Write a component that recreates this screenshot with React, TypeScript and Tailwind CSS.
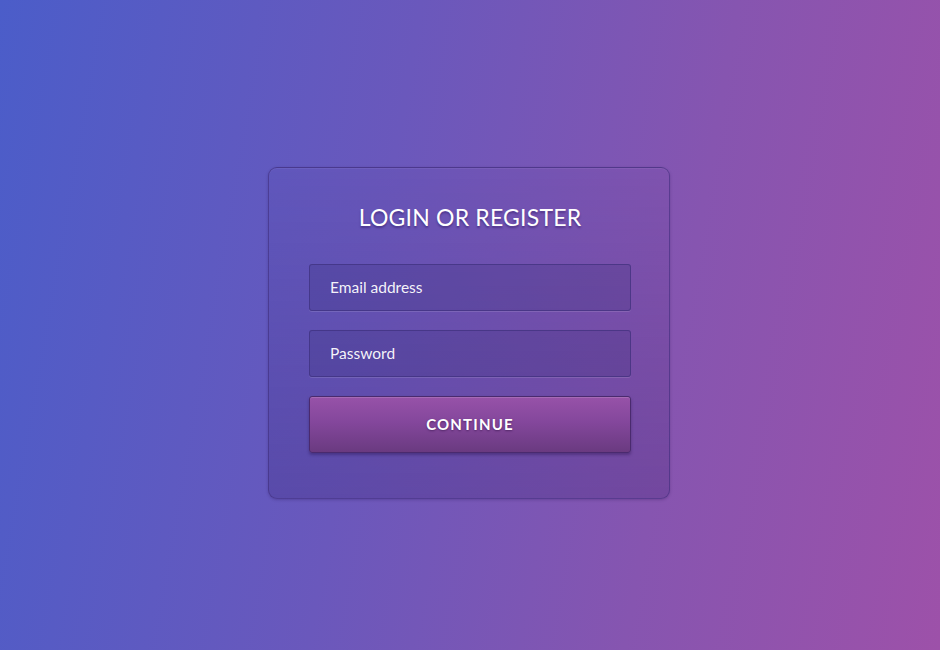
export default function App() {
  return (
    <div className="w-[940px] h-[650px] flex items-center justify-center pt-[16px] pr-[2px] bg-[linear-gradient(100deg,#4b5dc9_0%,#6a58bc_40%,#8655b0_70%,#9d51a9_100%)] font-['Lato','Liberation_Sans',sans-serif]">

      {/* CARD */}

      <div className="w-[402px] h-[332px] rounded-[9px] border border-[#3f2d7c]/60 bg-[linear-gradient(180deg,rgba(60,30,110,0.04)_0%,rgba(45,25,100,0.22)_100%)] shadow-[0_1px_3px_rgba(30,10,70,0.25),inset_0_1px_0_rgba(255,255,255,0.06)] pl-[40px] pr-[38px] pt-[35px]">

        <h1 className="text-center text-[23px] leading-[28px] text-white tracking-[0.2px] [text-shadow:0_2px_2px_rgba(40,20,90,0.45)]">
          LOGIN OR REGISTER
        </h1>

        <div className="mt-[33px] flex flex-col gap-[19px]">

          <div className="h-[47px] rounded-[3px] border border-[#3a2d78]/60 bg-[#2e2a6e]/20 shadow-[0_1px_0_rgba(255,255,255,0.12)] flex items-center px-[20px] text-[15.5px] text-white/95">
            Email address
          </div>

          <div className="h-[47px] rounded-[3px] border border-[#3a2d78]/60 bg-[#2e2a6e]/20 shadow-[0_1px_0_rgba(255,255,255,0.12)] flex items-center px-[20px] text-[15.5px] text-white/95">
            Password
          </div>

          <button className="h-[57px] rounded-[3px] border border-[#4a2a6e] bg-[linear-gradient(180deg,#9752a8_0%,#84479c_45%,#6a3a80_100%)] shadow-[0_2px_3px_rgba(30,10,60,0.35),inset_0_1px_0_rgba(255,255,255,0.15)] text-white text-[15px] font-bold tracking-[1.2px] [text-shadow:0_1px_2px_rgba(40,10,60,0.5)]">
            CONTINUE
          </button>

        </div>

      </div>

    </div>
  )
}
